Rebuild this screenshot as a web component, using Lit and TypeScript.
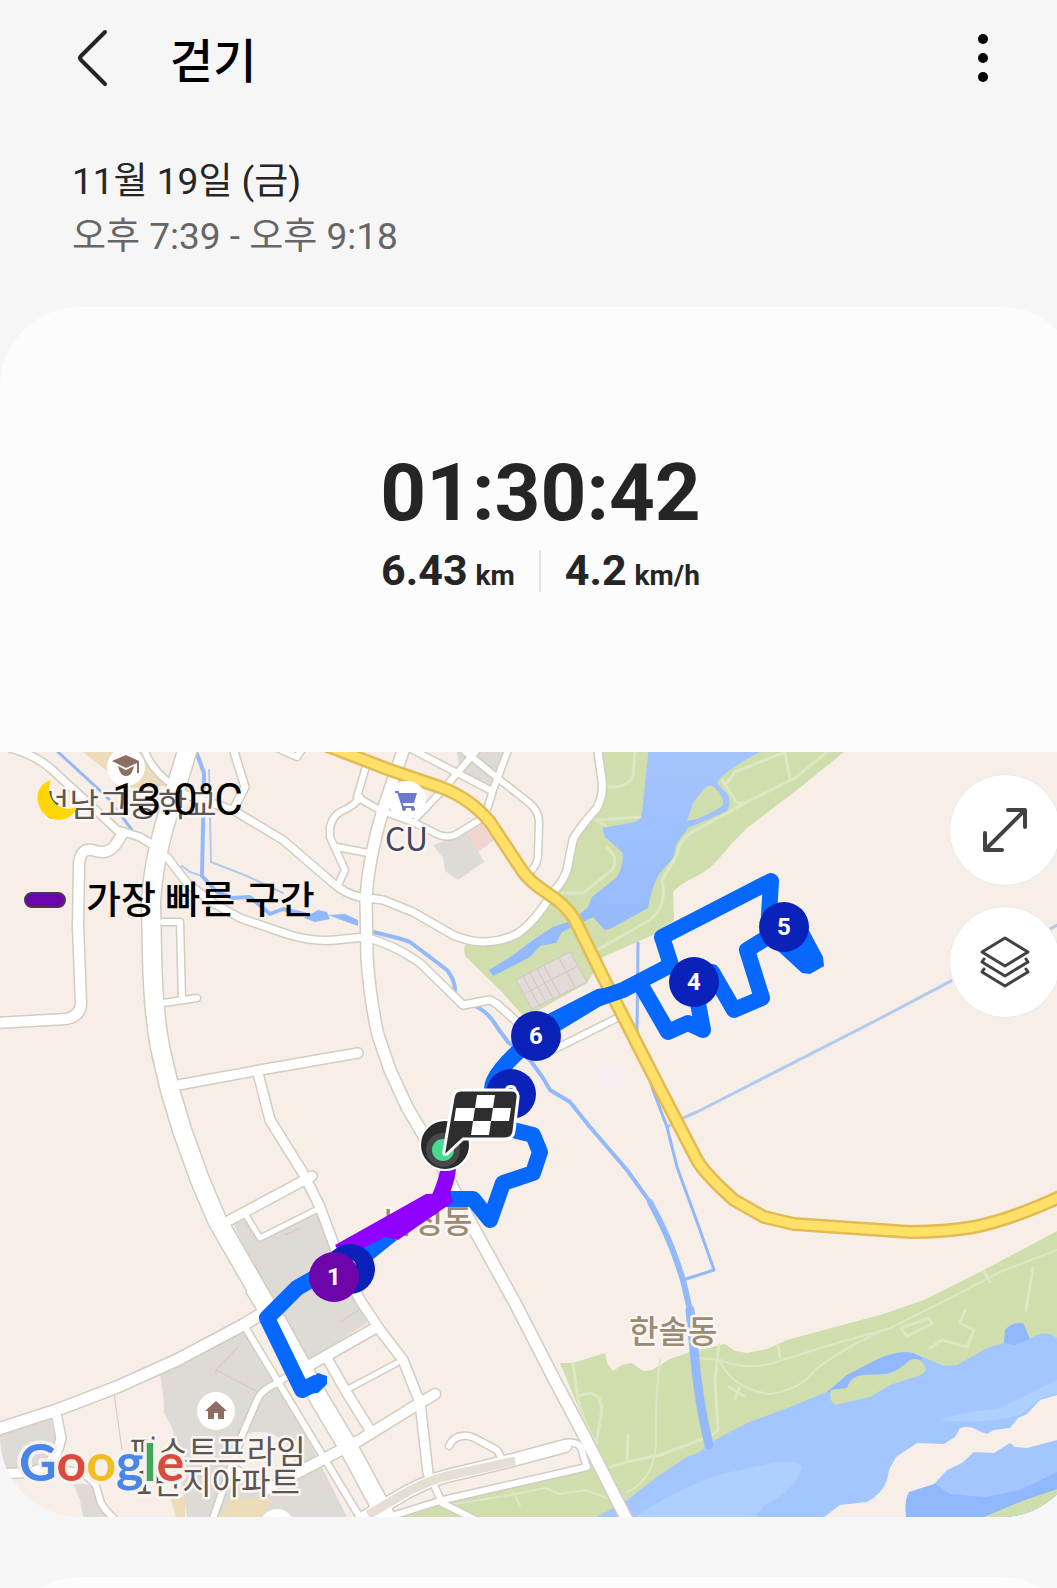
import { LitElement, html, svg, css } from "lit";
import { customElement } from "lit/decorators.js";

interface Road {
  d: string;
  w: number;
}

interface Marker {
  n: number;
  x: number;
  y: number;
  fast?: boolean;
}

/* Map geometry shares one coordinate space with the svg viewBox. */
const ROADS: Road[] = [
  { w: 18, d: "M189 745L170 807Q157 848 153 880L151 900L152 953Q153 1010 160 1047L170 1090L182 1130L200 1180L217 1220L240 1260L263 1300L277 1322L320 1400L350 1450L377 1500L390 1525" },
  { w: 10, d: "M-5 1023L66 1019Q81 1016 81 1003L78 927L79 865Q80 848 92 850Q108 856 116 844L123 833" },
  { w: 7, d: "M10 748Q35 755 50 768L85 800L117 830L140 837L156 847" },
  { w: 6, d: "M143 745Q148 765 167 781" },
  { w: 7, d: "M232 745L245 787L233 810M180 793L233 810L283 840L333 883Q345 894 360 897L383 900L413 912L453 935Q470 942 483 942Q500 942 515 935Q530 927 548 900" },
  { w: 7, d: "M553 892Q563 882 567 870L573 840Q576 832 597 808Q604 795 602 780L597 745" },
  { w: 6, d: "M360 797Q356 805 340 812Q328 820 330 837L345 870L337 887M337 847L368 853" },
  { w: 6, d: "M367 763L357 797L383 812M277 748L297 757L303 748" },
  { w: 11, d: "M405 745L383 810Q368 860 366 900L367 957Q370 1000 378 1035L390 1070L407 1107L440 1163L473 1227L515 1303L553 1377L590 1447L628 1522" },
  { w: 7, d: "M167 857L187 883L213 903L240 918L290 935Q315 942 335 940L365 937Q395 945 420 963L463 1005L490 1000L497 1004L517 1022" },
  { w: 6, d: "M163 922L180 922L182 1000M163 1003L197 998" },
  { w: 9, d: "M178 1085L260 1070L358 1053" },
  { w: 9, d: "M258 1073L270 1120L303 1173L320 1207L337 1253L360 1300L380 1330L403 1360L420 1403L428 1473" },
  { w: 9, d: "M230 1220L312 1176" },
  { w: 5, d: "M247 1217L260 1238L320 1208" },
  { w: 11, d: "M-5 1430L57 1410L117 1387L177 1360L243 1325L273 1307" },
  { w: 10, d: "M310 1365L377 1327" },
  { w: 6, d: "M245 1327L277 1380L364 1524M277 1383L300 1368M250 1292L266 1318" },
  { w: 6, d: "M277 1383Q262 1390 258 1398L243 1433L211 1524" },
  { w: 10, d: "M297 1473L360 1440L420 1403L435 1394" },
  { w: 9, d: "M328 1360L347 1393L370 1430" },
  { w: 5, d: "M350 1388L397 1363M345 1390L347 1396" },
  { w: 9, d: "M56 1413L61 1438Q58 1455 46 1466Q35 1473 20 1473L-5 1474M235 1470L266 1490L297 1473" },
  { w: 6, d: "M67 1470Q90 1474 96 1486L101 1503Q106 1512 118 1522" },
  { w: 12, d: "M365 1517L407 1492Q430 1480 447 1476L513 1460L565 1446" },
  { w: 6, d: "M565 1443Q582 1440 583 1455L587 1467L443 1500L395 1515M435 1487L442 1503L478 1521" },
  { w: 6, d: "M449 1446Q454 1436 463 1436Q470 1435 480 1441L497 1450L502 1459" },
  { w: 6, d: "M483 818L455 835Q445 839 435 833L413 822L385 812M417 817L440 793L477 750" },
  { w: 6, d: "M413 750L490 790M510 745L493 790L487 810M463 750L500 780L528 802Q539 810 539 823L538 855Q538 864 530 872" },
  { w: 6, d: "M555 1049L617 1018" },
];

const STREAMS: Road[] = [
  { w: 3, d: "M58 752L107 797L132 830" },
  { w: 4, d: "M197 754L204 773L203 827L202 876L217 892L233 898L250 897L270 914L283 909L308 915" },
  { w: 4, d: "M373 932Q400 938 410 942L447 970Q455 980 455 990M477 1007Q488 1012 497 1027L508 1042L530 1060L543 1078L550 1090L570 1102L590 1127L627 1170L650 1202" },
  { w: 3, d: "M638 943L637 1030L653 1090L667 1127L677 1167L700 1230L714 1270L683 1280" },
  { w: 6, d: "M650 1202Q668 1235 677 1262L683 1280L690 1310" },
  { w: 9, d: "M690 1310L694 1350Q698 1400 709 1445" },
];

const DITCHES: Road[] = [
  { w: 2, d: "M209 770L211 862L247 876L283 893M202 876L190 872L182 866L178 870" },
  { w: 3, d: "M667 1127L683 1118L697 1112L877 1020L1084 911" },
];

const PATHS: Road[] = [
  { w: 3, d: "M573 1363L578 1400Q585 1425 594 1440M578 1396L590 1393Q604 1396 601 1415L596 1445M610 1467L627 1462L660 1455L700 1440Q712 1436 718 1430L715 1380L719 1345M627 1462L628 1435" },
  { w: 2, d: "M660 1360Q655 1400 656 1440Q655 1480 627 1492M443 1506L510 1495L545 1488L560 1494L585 1490L607 1498M513 1492L520 1505" },
  { w: 2, d: "M697 1358L720 1360Q745 1370 770 1364L830 1345L890 1328L950 1298L1000 1272L1057 1250L1081 1240M720 1362Q735 1390 770 1394Q800 1390 815 1370Q840 1350 880 1332" },
  { w: 3, d: "M901 1328L929 1318L932 1324L907 1336ZM778 1346L780 1357M930 1348L942 1340L967 1347L974 1330L960 1323L965 1310M1033 1268L1026 1310M984 1272L990 1282M729 1387L744 1396M739 1388L735 1398" },
  { w: 3, d: "M635 752L633 775Q630 787 610 787L600 786M605 825L595 820L640 817M607 848Q620 858 612 870L583 893L562 893M727 783L735 772L785 752M722 780L737 803L745 803L795 778L827 752M785 752L790 780M745 803L700 828Q680 836 677 855L662 880Q668 905 650 920L597 950" },
];

const ROUTE =
  "M318 1382L302 1390L267 1318L297 1288L380 1240L443 1199L473 1199L490 1220L503 1183L533 1173L540 1152L533 1135L505 1128L492 1090Q490 1074 536 1036L597 999L623 990L671 965L662 937L771 881L769 915L784 927L747 950L762 998L734 1010L712 972L694 982L703 1030L688 1023L668 1032L638 980";

const MARKERS: Marker[] = [
  { n: 6, x: 536, y: 1036 },
  { n: 5, x: 784, y: 927 },
  { n: 4, x: 694, y: 982 },
  { n: 3, x: 511, y: 1094 },
  { n: 2, x: 350, y: 1269 },
  { n: 1, x: 334, y: 1277, fast: true },
];

@customElement("route-map")
export class RouteMap extends LitElement {
  static styles = css`
    :host {
      display: block;
      position: relative;
      overflow: hidden;
      border-radius: 0 0 80px 80px;
      font-family: Roboto, "Noto Sans CJK KR", sans-serif;
    }
    .map {
      display: block;
      width: 100%;
      height: auto;
    }
    .land { fill: #f7eee8; }
    .green { fill: #cfdeac; }
    .water { fill: #91b8fc; }
    .river { fill: #a3c6ff; }
    .shoal { fill: #aed0ff; }
    .block { fill: #dedbd6; }
    .sand { fill: #ecdcb9; }
    .pink { fill: #f0d5d2; }
    .pale { fill: #f5eff2; }
    .plots { fill: #e3dbda; }
    .line {
      fill: none;
      stroke-linecap: round;
      stroke-linejoin: round;
    }
    .casing { stroke: #d2ccc1; }
    .road { stroke: #ffffff; }
    .stream { stroke: #93b9f8; }
    .ditch { stroke: #b3caf0; }
    .trail { stroke: #dde7c3; }
    .grid { stroke: #cfc8bd; stroke-width: 1; fill: none; }
    .tunnel { stroke: #e6ddd5; stroke-width: 9; stroke-linecap: butt; }
    .hwy-edge { stroke: #e2bb54; stroke-width: 14; }
    .hwy { stroke: #ffe168; stroke-width: 9; }
    .route { stroke: #0768ff; stroke-width: 16; stroke-linecap: butt; stroke-linejoin: round; }
    .route-fill { fill: #0768ff; }
    .fast { fill: #9000ff; }
    .fast-line { stroke: #9000ff; stroke-width: 16; stroke-linecap: butt; }
    .poi { fill: #ffffff; }
    .brown { fill: #8d6e63; }
    .cart { fill: #6b7ac9; }
    .cart-line { stroke: #6b7ac9; stroke-width: 2; fill: none; }
    .label {
      font-family: "Noto Sans CJK KR", sans-serif;
      font-size: 32px;
      fill: #5b5651;
      stroke: #fbf6f3;
      stroke-width: 5px;
      stroke-linejoin: round;
      paint-order: stroke;
    }
    .label.shop { fill: #45455c; }
    .label.area { fill: #9a8b72; font-weight: 500; }
    .logo {
      font-family: Lato, sans-serif;
      font-size: 52px;
      font-weight: 700;
      stroke: #f6f1ee;
      stroke-width: 7px;
      stroke-linejoin: round;
      paint-order: stroke;
    }
    .g-blue { fill: #4a86e8; }
    .g-red { fill: #dc4a3d; }
    .g-yellow { fill: #f3bd1d; }
    .g-green { fill: #3fa757; }
    .km { fill: #0b22b8; }
    .km.best { fill: #6c06ab; }
    .km-text {
      fill: #ffffff;
      font-family: Roboto, sans-serif;
      font-size: 24px;
      font-weight: 700;
      text-anchor: middle;
    }
    .ring { fill: #2b2b2b; stroke: #ffffff; stroke-width: 2; }
    .ring-mid { fill: #484848; }
    .ring-core { fill: #45dc91; }
    .flag { fill: #2e2e2e; stroke: #ffffff; stroke-width: 3; stroke-linejoin: round; }
    .check { fill: #ffffff; }
    .info {
      position: absolute;
      top: 16px;
      left: 24px;
      display: flex;
      flex-direction: column;
      gap: 46px;
      color: #000000;
    }
    .row {
      display: flex;
      align-items: center;
    }
    .weather {
      gap: 34px;
      padding-left: 12px;
      font-size: 44px;
      line-height: 64px;
    }
    .moon {
      display: block;
      width: 42px;
      height: 42px;
      fill: #ffd60a;
    }
    .legend {
      gap: 20px;
      font-size: 38px;
      font-weight: 500;
      line-height: 44px;
    }
    .pill {
      box-sizing: border-box;
      width: 42px;
      height: 16px;
      border: 2px solid #47384f;
      border-radius: 8px;
      background: #6a06ab;
    }
    .tools {
      position: absolute;
      top: 22px;
      right: 20px;
      display: flex;
      flex-direction: column;
      gap: 20px;
    }
    .tool {
      display: grid;
      place-items: center;
      width: 112px;
      height: 112px;
      padding: 0;
      border: 1px solid #ece8e5;
      border-radius: 50%;
      background: #ffffff;
      cursor: pointer;
    }
    .glyph {
      display: block;
      width: 52px;
      height: 52px;
      fill: none;
      stroke: #424242;
      stroke-width: 4;
      stroke-linecap: round;
      stroke-linejoin: round;
    }
    .glyph.thin { stroke-width: 3; }
  `;

  private renderMap() {
    return html`
      <svg class="map" viewBox="0 752 1081 765" role="img" aria-label="걷기 경로 지도">
        <defs>
          <linearGradient id="lake" x1="0" y1="0" x2="0" y2="1">
            <stop offset="0" stop-color="#a6c5ff"></stop>
            <stop offset="1" stop-color="#91b8fc"></stop>
          </linearGradient>
        </defs>
        <rect class="land" x="0" y="752" width="1081" height="765"></rect>

        <path class="green" d="M597 745L602 780L597 808L573 838L567 870L553 892L530 922Q515 937 495 941L465 945Q463 952 466 957L500 990L525 1018L587 983L603 957L653 935L674 920L673 893Q676 886 697 876Q712 868 722 855Q733 841 747 828L797 790L844 752Z"></path>
        <path fill="url(#lake)" d="M649 745L642 813Q640 822 630 823L602 828L605 837L622 852Q625 862 617 877L592 897L588 907L573 920L553 927L533 940L512 956L489 970L493 976L515 965L530 957L540 946L556 943L562 932L593 917L605 930L612 928L648 908Q652 885 660 873L673 858L677 843L688 828L700 823L727 811Q732 803 728 795L717 783Q722 772 760 752Z"></path>
        <path class="green" d="M687 821L693 803L703 790Q710 782 715 788Q725 798 723 805Q720 809 697 819Z"></path>
        <path class="green" d="M560 1363L573 1363L605 1353L607 1363L613 1371L622 1365L632 1363L643 1371L652 1370L670 1359L690 1352L725 1344L735 1351L747 1353L767 1349L787 1340L835 1327L880 1315L924 1300L984 1270L1057 1231L1081 1218V1517H400L450 1502L587 1470L600 1460Z"></path>
        <path class="river" d="M597 1517L627 1500L657 1477L687 1457L700 1452L706 1445L717 1439L747 1423L790 1407L827 1392L847 1375L880 1358Q900 1350 913 1353L944 1366L957 1365L987 1348L1004 1343L1005 1330Q1012 1322 1023 1323L1030 1339Q1040 1332 1050 1334L1057 1338L1081 1346V1517Z"></path>
        <path class="water" d="M827 1392L847 1375L880 1358Q900 1350 913 1353L923 1358L900 1378L862 1380L846 1390ZM906 1517L905 1500L909 1492L934 1483L950 1494L985 1497L1020 1490L1057 1472H1081V1517ZM1004 1343L1005 1330Q1012 1322 1023 1323L1030 1339L1015 1345Z"></path>
        <path class="shoal" d="M635 1517Q690 1480 740 1470Q800 1455 802 1468Q795 1490 765 1505L755 1517ZM941 1420Q950 1414 1000 1408L1057 1380V1394L1040 1399L1020 1415Q980 1425 941 1420Z"></path>
        <path class="green" d="M831 1390L847 1388Q850 1377 862 1375L887 1374Q900 1370 910 1360Q920 1356 925 1367Q928 1373 915 1377L890 1385L870 1397L835 1405Q828 1400 831 1390Z"></path>
        <path class="land" d="M824 1517L840 1505L867 1502Q882 1494 887 1480L889 1470L896 1457L917 1443L944 1444L955 1437L960 1428Q970 1425 979 1431L987 1434L994 1430L1010 1428L1018 1418L1027 1414L1040 1400L1057 1395H1081V1436L1057 1440L1027 1448L1015 1447L1010 1443L994 1453L974 1452L962 1463L947 1470L934 1484L909 1492Q904 1500 906 1517Z"></path>
        <path class="green" d="M984 1517L1017 1503L1057 1489L1081 1479V1517Z"></path>

        <path class="block" d="M233 1223L247 1218L260 1240L317 1212L337 1253L367 1323L310 1360L277 1317ZM160 1375L243 1330L280 1383L347 1517H187L173 1430L164 1413Q164 1395 160 1375ZM0 1433L50 1417L56 1443L40 1467L0 1470ZM73 1483L93 1485L108 1517H83L80 1500ZM433 845L457 837L467 833L478 850L484 862L458 880L445 871L443 858ZM457 752H507L490 785L460 775Z"></path>
        <path class="pink" d="M467 833L482 823L494 840L478 852Z"></path>
        <path class="land" d="M235 1445Q250 1425 275 1435L300 1455L270 1480L240 1475Z"></path>
        <path class="sand" d="M219 1517L231 1497L273 1500L262 1517ZM170 1497H185V1517H176ZM83 752H145L167 785L140 792L118 780Z"></path>
        <path class="pale" d="M593 1073L605 1060L617 1068L623 1088L605 1088Z"></path>
        <path class="plots" d="M516 980L570 952L587 982L532 1009Z"></path>
        <path class="grid" d="M516 980L570 952L587 982L532 1009ZM524 994L578 966M523 976L539 1005M530 973L546 1002M537 969L553 998M544 966L560 995M559 958L575 987M216 1374V1370L238 1347M216 1370L258 1392M114 1393L122 1450M285 1235L300 1228M340 1322L365 1306"></path>

        ${PATHS.map((p) => svg`<path class="line trail" stroke-width=${p.w} d=${p.d}></path>`)}
        ${DITCHES.map((p) => svg`<path class="line ditch" stroke-width=${p.w} d=${p.d}></path>`)}
        ${STREAMS.map((p) => svg`<path class="line stream" stroke-width=${p.w} d=${p.d}></path>`)}
        <path class="water" d="M304 918L318 910L327 912L330 919L315 922ZM328 915L345 914L358 920V926L344 921Z"></path>

        ${ROADS.map((r) => svg`<path class="line casing" stroke-width=${r.w + 3} d=${r.d}></path>`)}
        ${ROADS.map((r) => svg`<path class="line road" stroke-width=${r.w} d=${r.d}></path>`)}
        <path class="line tunnel" d="M368 1515L407 1492Q430 1480 447 1476L515 1461"></path>

        ${["hwy-edge", "hwy"].map(
          (c) => svg`<path class="line ${c}" d="M325 745L390 770L440 787Q470 798 490 822L523 872Q530 881 540 888L557 900Q570 910 577 924L603 977L630 1030L657 1083L697 1160Q705 1174 734 1200L764 1217L794 1224L910 1232Q945 1232 974 1227Q1010 1220 1062 1196L1090 1180"></path>`,
        )}

        <circle class="poi" cx="126" cy="767" r="19"></circle>
        <path class="brown" d="M112 761L126 755L139 761V773H137V763L126 768ZM118 766L126 770L134 766Q132 776 126 776Q120 776 118 766Z"></path>
        <circle class="poi" cx="407" cy="800" r="19"></circle>
        <path class="cart" d="M399 793H417L414 803H401Z"></path>
        <path class="cart-line" d="M395 792H398L403 807H414"></path>
        <circle class="cart" cx="404" cy="809" r="2"></circle>
        <circle class="cart" cx="413" cy="809" r="2"></circle>
        <circle class="poi" cx="216" cy="1411" r="19"></circle>
        <path class="brown" d="M216 1401L227 1411H224V1419H218V1413H214V1419H208V1411H205Z"></path>
        <circle class="poi" cx="277" cy="1526" r="17"></circle>

        <text class="label" x="40" y="816">성남고등학교</text>
        <text class="label shop" x="385" y="851">CU</text>
        <text class="label area" x="384" y="1233">나성동</text>
        <text class="label area" x="629" y="1343">한솔동</text>
        <text class="label" x="129" y="1463">퍼스트프라임</text>
        <text class="label" x="135" y="1494">1단지아파트</text>

        <path class="line route" d=${ROUTE}></path>
        <path class="route-fill" d="M540 1018L597 989L625 985L625 995L600 1006L548 1036ZM308 1380L318 1373L327 1376V1384L318 1393L308 1394L298 1397ZM777 950L802 973L810 974L824 966L823 957L806 925ZM385 1237L397 1240L372 1260L360 1250Z"></path>
        <path class="line fast-line" d="M448 1168Q448 1178 439 1199"></path>
        <path class="fast" d="M335 1245L426 1194L450 1193L453 1202L398 1240L385 1237L360 1250L345 1262Z"></path>

        ${MARKERS.map(
          (m) => svg`
            <circle class="km ${m.fast ? "best" : ""}" cx=${m.x} cy=${m.y} r="25"></circle>
            <text class="km-text" x=${m.x} y=${m.y + 8}>${m.n}</text>`,
        )}

        <circle class="ring" cx="445" cy="1145" r="25"></circle>
        <circle class="ring-mid" cx="443" cy="1150" r="17"></circle>
        <circle class="ring-core" cx="443" cy="1150" r="11"></circle>
        <path class="flag" d="M461 1090H511Q519 1090 518 1098L514 1131Q513 1139 505 1139H463L447 1154Q443 1156 444 1151L453 1098Q454 1090 461 1090Z"></path>
        <path class="check" d="M477 1095H495L493 1108H475ZM456 1108H475L473 1121H454ZM493 1108H511L509 1121H491ZM473 1121H491L489 1135H471Z"></path>

        <text class="logo" x="19" y="1481"><tspan class="g-blue">G</tspan><tspan class="g-red">o</tspan><tspan class="g-yellow">o</tspan><tspan class="g-blue">g</tspan><tspan class="g-green">l</tspan><tspan class="g-red">e</tspan></text>
      </svg>
    `;
  }

  render() {
    return html`
      ${this.renderMap()}
      <div class="info">
        <div class="row weather">
          <svg class="moon" viewBox="0 0 42 42" aria-hidden="true">
            <path d="M15 1C4 4 0 14 2 23C4 34 13 41 23 41C31 41 38 36 41 28C32 32 22 29 17 22C12 15 12 8 15 1Z"></path>
          </svg>
          <span>13.0°C</span>
        </div>
        <div class="row legend">
          <span class="pill"></span>
          <span>가장 빠른 구간</span>
        </div>
      </div>
      <div class="tools">
        <button class="tool" type="button" aria-label="지도 확대">
          <svg class="glyph" viewBox="0 0 52 52" aria-hidden="true">
            <path d="M7 45L45 7M29 6H46V23M6 29V46H23"></path>
          </svg>
        </button>
        <button class="tool" type="button" aria-label="지도 유형">
          <svg class="glyph thin" viewBox="0 0 52 52" aria-hidden="true">
            <path d="M26 2L49 16L26 30L3 16ZM5 23L3 26L26 40L49 26L47 23M5 33L3 36L26 50L49 36L47 33"></path>
          </svg>
        </button>
      </div>
    `;
  }
}

@customElement("app-root")
export class AppRoot extends LitElement {
  static styles = css`
    :host {
      display: block;
      min-height: 100vh;
      background: #f6f6f6;
      color: #252525;
      font-family: Roboto, "Noto Sans CJK KR", sans-serif;
    }
    .page {
      display: flex;
      flex-direction: column;
    }
    .bar {
      display: flex;
      align-items: center;
      gap: 48px;
      height: 116px;
      padding: 0 56px 0 64px;
    }
    .title {
      flex: 1;
      margin: 0;
      padding: 8px 0 0 2px;
      color: #000000;
      font-size: 47px;
      font-weight: 500;
      line-height: 64px;
    }
    .icon-button {
      display: grid;
      place-items: center;
      width: 56px;
      height: 64px;
      padding: 0;
      border: 0;
      background: none;
      cursor: pointer;
    }
    .icon {
      display: block;
      width: 56px;
      height: 60px;
    }
    .chevron {
      fill: none;
      stroke: #252525;
      stroke-width: 4;
      stroke-linecap: round;
      stroke-linejoin: round;
    }
    .when {
      padding: 38px 72px 0;
      font-size: 37px;
      line-height: 55px;
    }
    .when p {
      margin: 0;
    }
    .when .span {
      color: #666666;
    }
    .card {
      margin: 43px -24px 0 0;
      border-radius: 80px;
      background: #fcfcfc;
    }
    .summary {
      display: flex;
      flex-direction: column;
      align-items: center;
      padding: 144px 0 156px;
    }
    .time {
      margin: 0;
      font-size: 80px;
      font-weight: 700;
      line-height: 84px;
    }
    .stats {
      display: flex;
      align-items: center;
      gap: 24px;
      margin-top: 10px;
      font-weight: 700;
      line-height: 51px;
    }
    .stat {
      display: flex;
      align-items: baseline;
      gap: 8px;
      height: 51px;
    }
    .rule {
      width: 2px;
      height: 42px;
      background: #e4e4e4;
    }
    .value {
      font-size: 43px;
    }
    .unit {
      font-size: 28px;
    }
    .next {
      height: 160px;
      margin-top: 60px;
    }
    .clip {
      max-height: 100vh;
      overflow: hidden;
    }
  `;

  render() {
    return html`
      <div class="clip">
        <main class="page">
          <header class="bar">
            <button class="icon-button" type="button" aria-label="뒤로">
              <svg class="icon" viewBox="0 0 56 60" aria-hidden="true">
                <path class="chevron" d="M41 4L17 28Q15 30 17 32L41 56"></path>
              </svg>
            </button>
            <h1 class="title">걷기</h1>
            <button class="icon-button more" type="button" aria-label="더보기">
              <svg class="icon" viewBox="0 0 56 60" aria-hidden="true">
                <circle cx="38" cy="11" r="5"></circle>
                <circle cx="38" cy="30" r="5"></circle>
                <circle cx="38" cy="49" r="5"></circle>
              </svg>
            </button>
          </header>
          <section class="when">
            <p>11월 19일 (금)</p>
            <p class="span">오후 7:39 - 오후 9:18</p>
          </section>
          <section class="card">
            <div class="summary">
              <p class="time">01:30:42</p>
              <div class="stats">
                <span class="stat"><span class="value">6.43</span><span class="unit">km</span></span>
                <span class="rule"></span>
                <span class="stat"><span class="value">4.2</span><span class="unit">km/h</span></span>
              </div>
            </div>
            <route-map></route-map>
          </section>
          <section class="card next"></section>
        </main>
      </div>
    `;
  }
}
